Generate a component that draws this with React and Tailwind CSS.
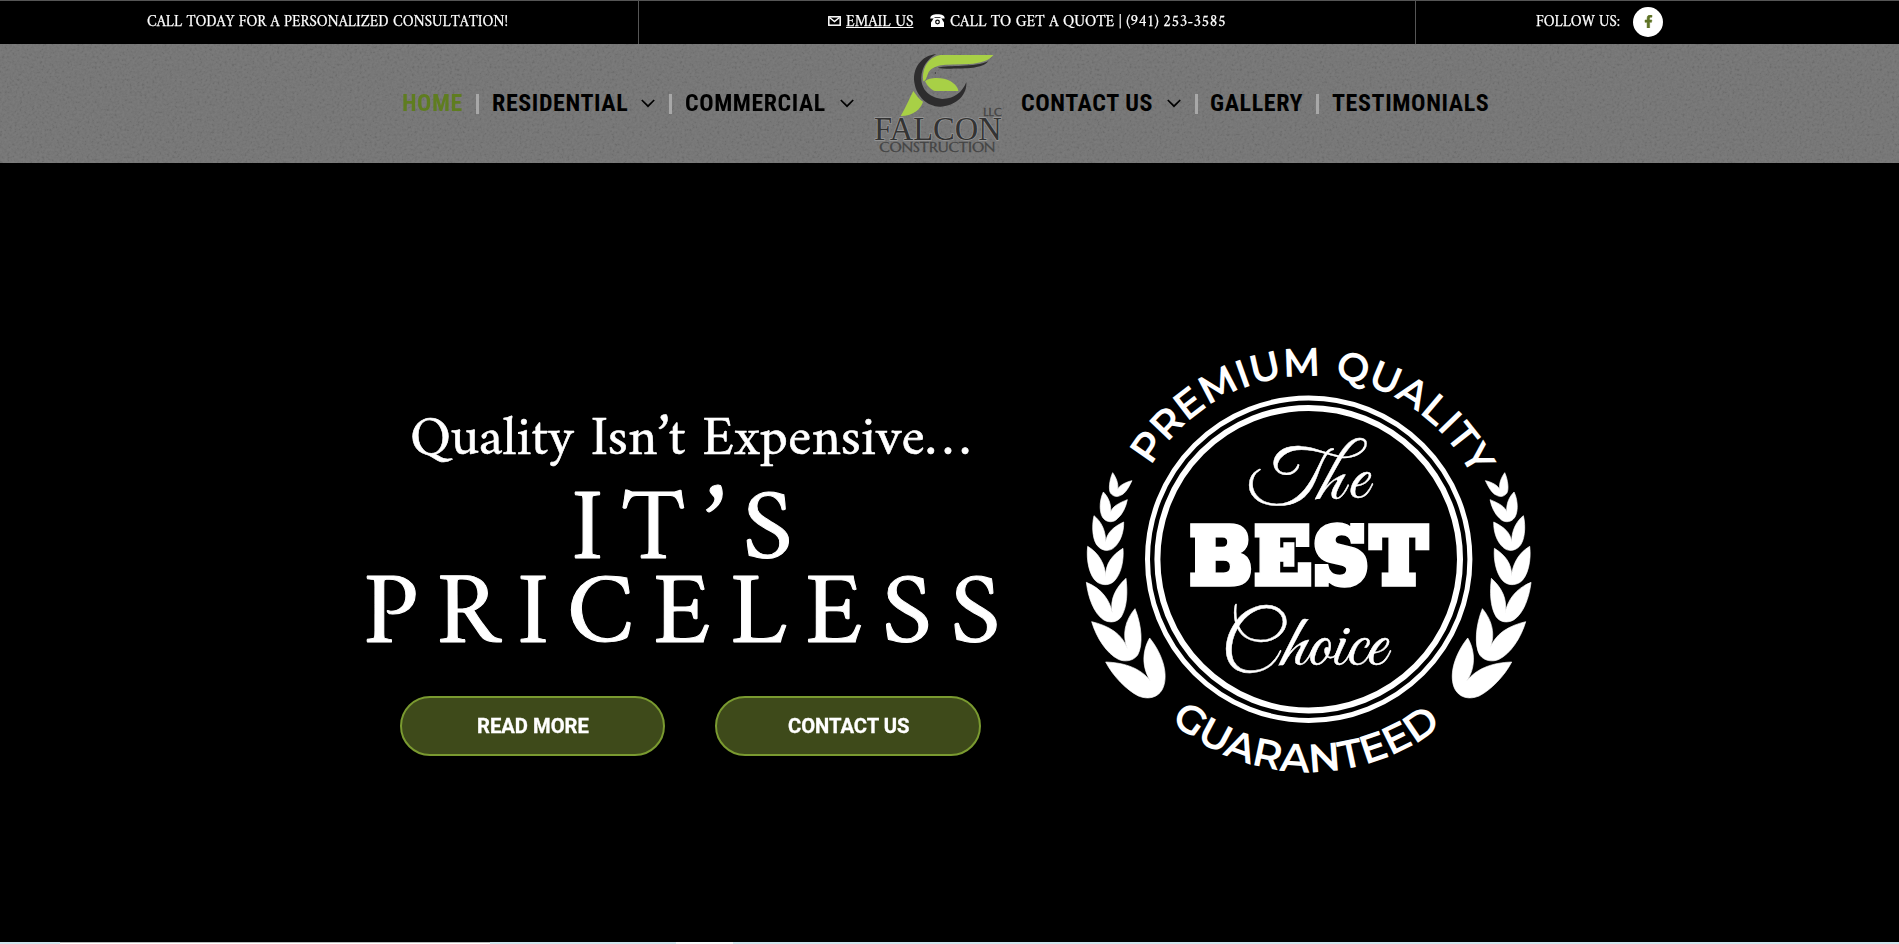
import { useLayoutEffect, useRef, useState } from "react";
import { FaFacebookF } from "react-icons/fa";

// Stretches its text horizontally to fill the width given by its class.
function Fit({ className, children }) {
  const box = useRef(null);
  const text = useRef(null);
  const [scale, setScale] = useState(1);
  useLayoutEffect(() => {
    setScale(box.current.clientWidth / text.current.offsetWidth);
  }, []);
  return (
    <span ref={box} className={"block shrink-0 whitespace-nowrap " + className}>
      <span ref={text} className="inline-block origin-left" style={{ transform: `scaleX(${scale})` }}>
        {children}
      </span>
    </span>
  );
}

function TopBar() {
  return (
    <div className="flex h-11 overflow-hidden border-t border-[#555] bg-black text-[15px] leading-[43px] text-white [-webkit-text-stroke:0.25px_white]">
      <div className="flex w-[639px] shrink-0 border-r border-[#555] pl-[147px]">
        <Fit className="w-[361px]">CALL TODAY FOR A PERSONALIZED CONSULTATION!</Fit>
      </div>
      <div className="flex w-[777px] shrink-0 border-r border-[#555] pl-[189px]">
        <svg className="mt-[15px] h-[10px] w-[13px]" viewBox="0 0 13 10" fill="none" stroke="#fff" strokeWidth="1.5">
          <rect x=".8" y=".8" width="11.4" height="8.4" />
          <path d="M1.5 1.5 6.5 5.500l5-4" />
        </svg>
        <a href="#email" className="ml-[5px] block">
          <Fit className="w-[67px] [&>span]:underline [&>span]:underline-offset-1">EMAIL US</Fit>
        </a>
        <svg className="mt-[13px] ml-[17px] h-[13px] w-[15px]" viewBox="0 0 15 13" fill="#fff">
          <path d="M.3 4.600C.3 1.600 3 .3 7.500.3s7.200 1.300 7.200 4.300H10.500V3h-6v1.600z" />
          <path fillRule="evenodd" d="M4 3.800h7l3 4.700V13H1V8.500zM7.500 5.600a2.400 2.400 0 1 0 0 4.800 2.400 2.400 0 0 0 0-4.800zm0 1.200a1.200 1.200 0 1 1 0 2.400 1.200 1.200 0 0 1 0-2.400z" />
        </svg>
        <Fit className="ml-[5px] w-[276px]">CALL TO GET A QUOTE | (941) 253-3585</Fit>
      </div>
      <div className="flex pl-[120px]">
        <Fit className="w-[84px]">FOLLOW US:</Fit>
        <a href="#facebook" className="mt-[6px] ml-[13px] flex size-[30px] items-center justify-center rounded-full bg-white pb-[2px]">
          <FaFacebookF className="size-[13px] text-[#5f7326]" stroke="currentColor" strokeWidth="20" />
        </a>
      </div>
    </div>
  );
}

function Chevron({ className }) {
  return (
    <svg className={"mt-[55px] h-[9px] w-[14px] shrink-0 " + className} viewBox="0 0 14 9" fill="none" stroke="#000" strokeWidth="1.7">
      <path d="M.8 1 7 7.200 13.200 1" />
    </svg>
  );
}

function Divider({ className }) {
  return <span className={"mt-[50px] h-5 w-[3px] shrink-0 bg-[#a8a8a8] " + className} />;
}

function Logo() {
  return (
    <svg className="h-[119px] w-40 shrink-0 font-normal tracking-normal" viewBox="0 0 480 357">
      <g fill="#2d2c2d">
        <path d="M232 30C185 35 160 75 166 115c6 45 44 75 79 73 50-3 80-38 77-73-12 30-37 50-72 50-45-5-65-35-63-65 1-30 18-55 45-70z" />
        <path d="M236 71c35-8 110 0 152-19-18 22-68 22-112 22-20 0-32-1-40-3z" />
        <circle cx="229" cy="87" r="2" />
      </g>
      <g fill="#a8d046">
        <path d="M403 33H245c-40 7-57 42-52 79 12-4 10-22 19-32 11-12 28-17 48-18l70-2c35-2 60-10 73-27z" />
        <path d="M198 112c12-12 52-14 77 0 15 10 21 18 23 29h-70c-13-3-23-16-30-29z" />
        <path d="M163 141c7 11 17 24 29 32-7 22-27 42-67 43 15-25 25-50 38-75z" />
      </g>
      <text x="45" y="287" fontFamily="Liberation Serif, serif" fontSize="98" textLength="383" lengthAdjust="spacingAndGlyphs" fill="#333" stroke="#999" strokeWidth="4" paintOrder="stroke">
        FALCON
      </text>
      <g fontFamily="Marcellus, Lato, sans-serif" fill="#444" stroke="#444" strokeWidth="1">
        <text x="373" y="216" fontSize="34" textLength="55" lengthAdjust="spacingAndGlyphs">LLC</text>
        <text x="61" y="323" fontSize="43" textLength="348" lengthAdjust="spacingAndGlyphs">CONSTRUCTION</text>
      </g>
    </svg>
  );
}

function Header() {
  return (
    <header className="relative h-[119px] overflow-hidden bg-[#747474]">
      <svg className="absolute inset-0 h-full w-full opacity-[0.05]" aria-hidden="true">
        <filter id="grain">
          <feTurbulence type="fractalNoise" baseFrequency="0.4" numOctaves="2" />
          <feColorMatrix type="matrix" values="2 0 0 0 -0.5  2 0 0 0 -0.5  2 0 0 0 -0.5  0 0 0 0 1" />
        </filter>
        <rect width="100%" height="100%" filter="url(#grain)" />
      </svg>
      <nav className="relative flex font-[Roboto_Condensed,Roboto,sans-serif] text-2xl leading-[118px] font-bold tracking-wide text-black">
        <Fit className="ml-[402px] w-[61px] text-[#5f7d20]">HOME</Fit>
        <Divider className="ml-[13px]" />
        <Fit className="ml-[13px] w-[136px]">RESIDENTIAL</Fit>
        <Chevron className="ml-[13px]" />
        <Divider className="ml-[14px]" />
        <Fit className="ml-[13px] w-[141px]">COMMERCIAL</Fit>
        <Chevron className="ml-[14px]" />
        <span className="w-[5px] shrink-0" />
        <Logo />
        <Fit className="ml-[2px] w-[132px]">CONTACT US</Fit>
        <Chevron className="ml-[14px]" />
        <Divider className="ml-[14px]" />
        <Fit className="ml-[12px] w-[93px]">GALLERY</Fit>
        <Divider className="ml-[13px]" />
        <Fit className="ml-[13px] w-[157px]">TESTIMONIALS</Fit>
      </nav>
    </header>
  );
}

const CX = 228.7;
const CY = 219.2;

// Arc round the seal's centre; angles in degrees, 0 = up, clockwise.
function arc(radius, from, to) {
  const point = (a) => {
    const t = (a * Math.PI) / 180;
    return `${(CX + radius * Math.sin(t)).toFixed(2)} ${(CY - radius * Math.cos(t)).toFixed(2)}`;
  };
  return `M${point(from)}A${radius} ${radius} 0 0 ${to > from ? 1 : 0} ${point(to)}`;
}

const leaves = [
  "M128 428C118 450 115 480 122 490C130 500 142 502 152 496C168 490 178 468 186 452C168 456 148 466 143 478C146 460 138 442 128 428Z",
  "M100 486C86 515 88 555 102 567C112 578 132 578 142 566C158 553 168 530 172 509C145 520 126 530 122 547C124 520 114 500 100 486Z",
  "M72 557C64 590 68 635 85 650C98 664 120 665 133 652C152 635 162 605 161 576C132 590 110 607 107 637C108 605 95 575 72 557Z",
  "M53 649C48 690 58 740 82 757C98 767 120 767 134 752C154 730 162 690 159 655C127 675 106 700 107 741C107 705 86 668 53 649Z",
  "M49 757C55 805 72 850 100 869C118 880 142 878 154 860C172 830 173 785 168 745C138 773 119 805 127 850C121 812 95 775 49 757Z",
  "M65 875C80 925 110 970 145 988C165 997 190 993 203 975C220 945 215 885 195 836C165 872 155 915 173 958C157 910 115 887 65 875Z",
  "M107 996C130 1040 170 1080 205 1098C235 1110 262 1103 276 1080C298 1040 280 975 239 924C215 965 214 1020 249 1063C218 1015 165 998 107 996Z",
];

function Laurel() {
  return (
    <g transform="translate(-10 -10) scale(.33333)" stroke="#fff" strokeWidth="2">
      {leaves.map((d) => (
        <path key={d} d={d} />
      ))}
    </g>
  );
}

function Seal() {
  return (
    <svg className="h-[440px] w-[460px] shrink-0" viewBox="0 0 460 440" fill="#fff">
      <circle cx={CX} cy={CY} r="161.200" fill="none" stroke="#fff" strokeWidth="5" />
      <circle cx={CX} cy={CY} r="151.300" fill="none" stroke="#fff" strokeWidth="6" />
      <Laurel />
      <g transform={`translate(${CX * 2} 0) scale(-1 1)`}>
        <Laurel />
      </g>
      <defs>
        <path id="arc-premium" d={arc(183, -59.5, 20)} />
        <path id="arc-quality" d={arc(183, 8, 80)} />
        <path id="arc-guaranteed" d={arc(213, 220.5, 130)} />
      </defs>
      <g fontFamily="Montserrat, Inter, sans-serif" fontWeight="600" fontSize="40">
        <text textLength="202" lengthAdjust="spacingAndGlyphs">
          <textPath href="#arc-premium">PREMIUM</textPath>
        </text>
        <text textLength="176" lengthAdjust="spacingAndGlyphs">
          <textPath href="#arc-quality">QUALITY</textPath>
        </text>
        <text textLength="294" lengthAdjust="spacingAndGlyphs">
          <textPath href="#arc-guaranteed">GUARANTEED</textPath>
        </text>
      </g>
      <g fontFamily="Great Vibes, Liberation Serif, serif" stroke="#fff" strokeWidth=".4">
        <text x="169" y="158" fontSize="71.500" textLength="118.500" lengthAdjust="spacingAndGlyphs">The</text>
        <text x="141.500" y="325" fontSize="76">Choice</text>
      </g>
      <text x="108" y="245.500" fontFamily="Rokkitt, DejaVu Serif, serif" fontWeight="900" fontSize="105.500" textLength="242" lengthAdjust="spacingAndGlyphs" stroke="#fff" strokeWidth="1.500">
        BEST
      </text>
    </svg>
  );
}

function Pill({ className, label, labelClass }) {
  return (
    <button className={"flex h-[60px] items-center justify-center rounded-full border-2 border-[#7a9a30] bg-[#3e4a1a] font-[Roboto,sans-serif] text-xl font-bold text-white [-webkit-text-stroke:0.3px_white] " + className}>
      <Fit className={labelClass}>{label}</Fit>
    </button>
  );
}

function Hero() {
  return (
    <main className="flex h-[779px] bg-black text-white">
      <div className="ml-[360px] w-[720px] shrink-0 pt-[242px]">
        <h2 className="ml-[50px] h-[72px] text-[56px] leading-[72px] [-webkit-text-stroke:0.6px_white]">
          <Fit className="w-[561px]">Quality Isn’t Expensive…</Fit>
        </h2>
        <h1 className="mt-[14px] h-[168px] text-[103px] leading-[84px] [-webkit-text-stroke:1px_white]">
          <Fit className="ml-[211px] w-[240px] tracking-[18px]">IT’S</Fit>
          <Fit className="ml-[3px] w-[656px] tracking-[18px]">PRICELESS</Fit>
        </h1>
        <div className="mt-[37px] ml-10 flex gap-[50px]">
          <Pill className="w-[265px]" label="READ MORE" labelClass="w-[112px]" />
          <Pill className="w-[266px]" label="CONTACT US" labelClass="w-[121px]" />
        </div>
      </div>
      <div className="pt-[177px]">
        <Seal />
      </div>
    </main>
  );
}

export default function App() {
  return (
    <div className="h-[944px] w-[1899px] overflow-hidden bg-black font-[Amiri,Liberation_Serif,serif]">
      <TopBar />
      <Header />
      <Hero />
      <div className="flex h-[2px] bg-[#cfe6ee]">
        <div className="ml-[60px] w-[430px] border-t border-[#bbb] bg-white" />
        <div className="ml-[186px] w-[57px] bg-[#f4f8fa]" />
      </div>
    </div>
  );
}
